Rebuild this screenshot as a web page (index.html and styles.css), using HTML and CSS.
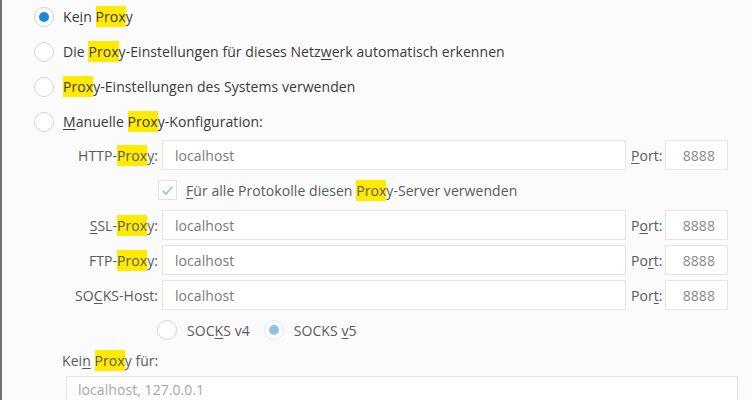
FILE: index.html
```html
<!DOCTYPE html>
<html lang="de">
<head>
<meta charset="utf-8">
<link rel="stylesheet" href="styles.css">
</head>
<body>
<div class="page">
  <div class="opts">
    <div class="opt"><span class="radio checked"></span><span class="lbl">Ke<u>i</u>n <mark>Prox</mark>y</span></div>
    <div class="opt"><span class="radio"></span><span class="lbl">Die <mark>Prox</mark>y-Einstellungen für dieses Netz<u>w</u>erk automatisch erkennen</span></div>
    <div class="opt"><span class="radio"></span><span class="lbl"><mark>Prox</mark>y-Einstellun<u>g</u>en des Systems verwenden</span></div>
    <div class="opt"><span class="radio"></span><span class="lbl"><u>M</u>anuelle <mark>Prox</mark>y-Konfiguration:</span></div>
  </div>

  <div class="manual">
    <label class="flabel">HTTP-<mark>Prox</mark><u>y</u>:</label>
    <div class="input">localhost</div>
    <label class="plabel"><u>P</u>ort:</label>
    <div class="input port">8888</div>

    <div class="cbrow">
      <span class="checkbox"><svg width="13" height="11" viewBox="0 0 13 11"><polyline points="1.5,5.5 5,9 11.5,1.5" fill="none" stroke="#9fc0dc" stroke-width="1.6"/></svg></span>
      <span class="dlbl"><u>F</u>ür alle Protokolle diesen <mark>Prox</mark>y-Server verwenden</span>
    </div>

    <label class="flabel"><u>S</u>SL-<mark>Prox</mark>y:</label>
    <div class="input">localhost</div>
    <label class="plabel">P<u>o</u>rt:</label>
    <div class="input port">8888</div>

    <label class="flabel">FTP-<mark>Prox</mark>y:</label>
    <div class="input">localhost</div>
    <label class="plabel">Po<u>r</u>t:</label>
    <div class="input port">8888</div>

    <label class="flabel">SO<u>C</u>KS-Host:</label>
    <div class="input">localhost</div>
    <label class="plabel">Por<u>t</u>:</label>
    <div class="input port">8888</div>

    <div class="socks">
      <span class="radio"></span><span class="dlbl v4">SOC<u>K</u>S v4</span>
      <span class="radio dis-checked"></span><span class="dlbl">SOCKS <u>v</u>5</span>
    </div>
  </div>

  <div class="noproxy"><span>Kei<u>n</u> <mark>Prox</mark>y für:</span></div>
  <div class="textarea">localhost, 127.0.0.1</div>
</div>
</body>
</html>
```
FILE: styles.css
```css
html, body {
  margin: 0;
  padding: 0;
  background: #fbfbfb;
}
.page {
  box-sizing: border-box;
  height: 400px;
  overflow: hidden;
  border-left: 2px solid #747474;
  background: #fbfbfb;
  font-family: "Open Sans", "Noto Sans", sans-serif;
  font-size: 14px;
  letter-spacing: 0.06px;
  color: #3a3a3a;
}
mark {
  background: #ffea00;
  color: inherit;
  padding: 1px 0;
}
u {
  text-underline-offset: 2px;
}
.opts {
  margin-top: -1px;
}
.opt {
  height: 35px;
  display: flex;
  align-items: center;
  padding-left: 32px;
}
.radio {
  box-sizing: border-box;
  width: 20px;
  height: 20px;
  border-radius: 50%;
  border: 1px solid #d4d4d8;
  background: #fff;
  flex: none;
  display: flex;
  align-items: center;
  justify-content: center;
}
.radio.checked::after,
.radio.dis-checked::after {
  content: "";
  width: 10px;
  height: 10px;
  border-radius: 50%;
  background: #1f87d5;
}
.radio.dis-checked {
  border-color: #e6e6e8;
}
.radio.dis-checked::after {
  background: #8ec3e6;
}
.opt .lbl {
  margin-left: 9px;
}
.manual {
  margin-top: 1px;
  display: grid;
  grid-template-columns: 160px 464px 39px 63px;
  grid-auto-rows: 30px;
  row-gap: 5px;
  color: #5a5a5a;
}
.flabel {
  text-align: right;
  padding-right: 4px;
  align-self: center;
}
.plabel {
  padding-left: 5px;
  align-self: center;
}
.input {
  box-sizing: border-box;
  height: 30px;
  border: 1px solid #e4e4e4;
  background: #fff;
  color: #7a7a7a;
  padding-left: 12px;
  display: flex;
  align-items: center;
}
.input.port {
  justify-content: flex-end;
  padding-left: 0;
  padding-right: 12px;
  color: #8a8a8a;
}
.cbrow {
  grid-column: 2 / -1;
  margin-left: -4px;
  display: flex;
  align-items: center;
}
.checkbox {
  box-sizing: border-box;
  width: 19px;
  height: 20px;
  border: 1px solid #e2e2e2;
  background: #fff;
  display: flex;
  align-items: center;
  justify-content: center;
  flex: none;
}
.cbrow .dlbl {
  margin-left: 9px;
}
.socks {
  grid-column: 2 / -1;
  margin-left: -5px;
  display: flex;
  align-items: center;
}
.socks .dlbl {
  margin-left: 10px;
}
.socks .v4 {
  margin-right: 14px;
}
.noproxy {
  height: 30px;
  display: flex;
  align-items: center;
  padding-left: 60px;
  color: #5a5a5a;
}
.textarea {
  box-sizing: border-box;
  margin-top: 1px;
  margin-left: 64px;
  width: 672px;
  height: 40px;
  border: 1px solid #e4e4e4;
  background: #fff;
  color: #a6a6a6;
  padding: 2px 11px;
  line-height: 22px;
}
```
